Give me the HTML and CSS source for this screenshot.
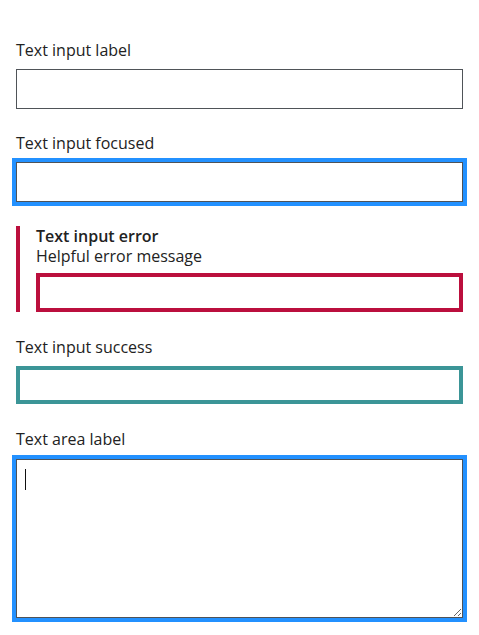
FILE: index.html
```html
<!DOCTYPE html>
<html lang="en">
<head>
<meta charset="utf-8">
<title>Form inputs</title>
<link rel="stylesheet" href="styles.css">
</head>
<body>
<form class="form">
  <div class="group">
    <label class="label" for="t1">Text input label</label>
    <input class="input" id="t1" type="text">
  </div>
  <div class="group">
    <label class="label" for="t2">Text input focused</label>
    <input class="input input--focus" id="t2" type="text">
  </div>
  <div class="group group--error">
    <label class="label label--bold" for="t3">Text input error</label>
    <span class="error-msg">Helpful error message</span>
    <input class="input input--error" id="t3" type="text">
  </div>
  <div class="group group--success">
    <label class="label" for="t4">Text input success</label>
    <input class="input input--success" id="t4" type="text">
  </div>
  <div class="group">
    <label class="label label--area" for="t5">Text area label</label>
    <div class="area-wrap">
      <textarea class="textarea" id="t5"></textarea>
      <span class="caret"></span>
    </div>
  </div>
</form>
</body>
</html>
```
FILE: styles.css
```css
* { box-sizing: border-box; }
html, body { margin: 0; padding: 0; background: #fff; }
body {
  font-family: "Open Sans", "Liberation Sans", sans-serif;
  font-size: 16px;
  color: #222222;
}
.form {
  display: flex;
  flex-direction: column;
  padding: 38px 16px 0 16px;
}
.group {
  display: flex;
  flex-direction: column;
  margin-bottom: 22px;
}
.group--success { margin-bottom: 23px; }
.label {
  display: block;
  line-height: 24px;
  margin-bottom: 7px;
}
.label--area { margin-bottom: 8px; }
.input {
  display: block;
  width: 100%;
  height: 40px;
  margin: 0;
  padding: 0 8px;
  border: 1px solid #4f5358;
  border-radius: 0;
  font: inherit;
  background: #fff;
  outline: none;
}
.input--focus {
  box-shadow: 0 0 0 4px #2391ff;
}
.group--error {
  border-left: 4px solid #bb0f3d;
  padding-left: 16px;
  margin-top: 2px;
  margin-bottom: 23px;
}
.label--bold {
  font-weight: 600;
  line-height: 20px;
  margin-bottom: 0;
}
.error-msg {
  display: block;
  line-height: 20px;
  margin-bottom: 7px;
}
.input--error {
  border: 4px solid #bb0f3d;
  height: 39px;
}
.input--success {
  border: 4px solid #3b9597;
  height: 38px;
}
.area-wrap {
  position: relative;
}
.textarea {
  display: block;
  width: 100%;
  height: 159px;
  margin: 0;
  padding: 8px;
  border: 1px solid #4f5358;
  border-radius: 0;
  font: inherit;
  background: #fff;
  outline: none;
  box-shadow: 0 0 0 4px #2391ff;
  resize: both;
}
.caret {
  position: absolute;
  left: 9px;
  top: 10px;
  width: 1px;
  height: 21px;
  background: #111;
}
```
